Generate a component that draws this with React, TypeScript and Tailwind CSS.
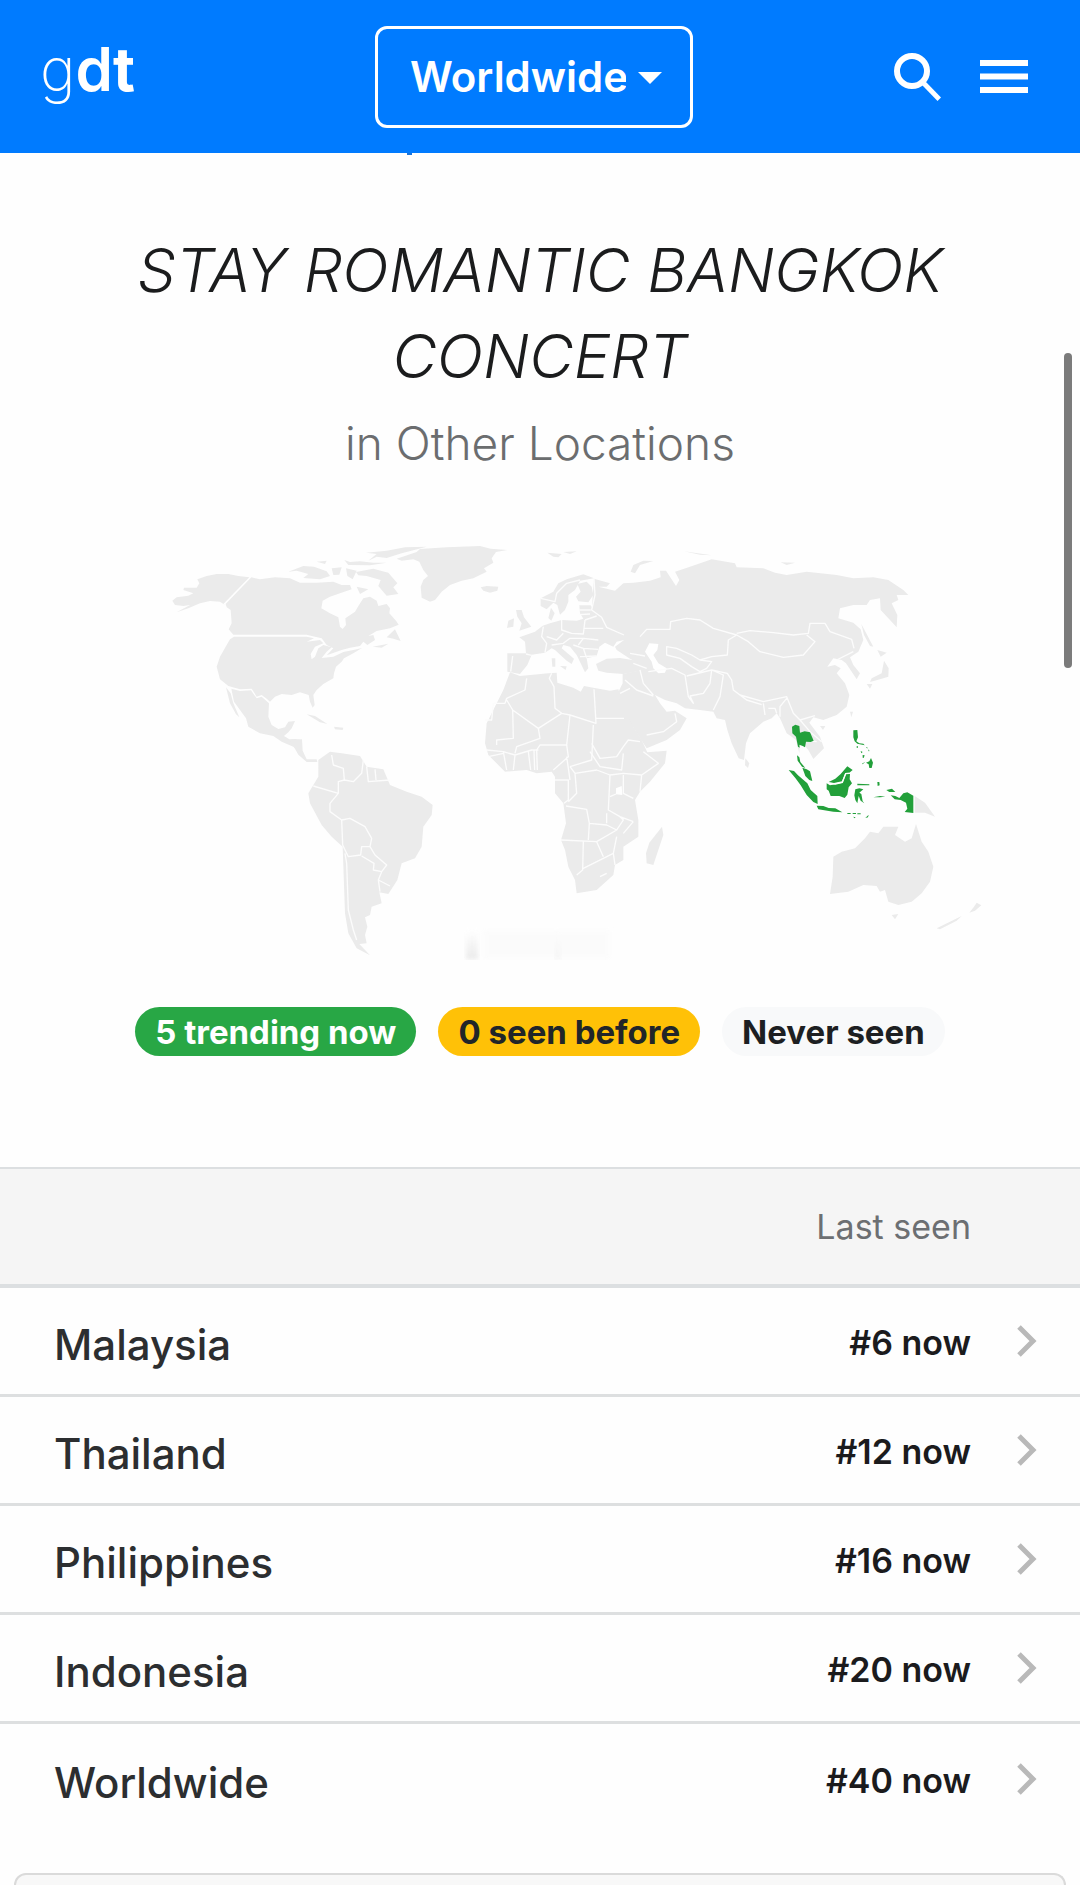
import React from "react";

const places = [
  { name: "Malaysia", rank: "#6 now" },
  { name: "Thailand", rank: "#12 now" },
  { name: "Philippines", rank: "#16 now" },
  { name: "Indonesia", rank: "#20 now" },
  { name: "Worldwide", rank: "#40 now" },
];

function Header() {
  return (
    <header className="relative grid h-[153px] grid-cols-[1fr_auto_1fr] items-center bg-[#007bff] pl-10 pr-[52px] text-white">
      <a href="#home" aria-label="gdt home" className="justify-self-start pb-4 text-[60px] leading-[72px]">
        <span className="font-extralight">g</span>
        <span className="font-semibold">d</span>
        <span className="font-bold">t</span>
      </a>
      <div className="relative">
        <select
          aria-label="Location"
          defaultValue="Worldwide"
          className="h-[102px] w-[318px] appearance-none rounded-[12px] border-3 border-white bg-transparent pl-[32px] pr-[64px] text-[42px] font-semibold text-white"
        >
          {places.map((p) => (
            <option key={p.name}>{p.name}</option>
          ))}
        </select>
        <svg aria-hidden="true" viewBox="0 0 24 12" className="pointer-events-none absolute right-[31px] top-[46px] h-3 w-6">
          <path d="M0 0H24L12 12Z" fill="white" />
        </svg>
      </div>
      <div className="flex items-center gap-[38px] justify-self-end">
        <button type="button" aria-label="Search">
          <svg viewBox="0 0 48 48" className="h-12 w-12">
            <circle cx="18" cy="18" r="15" fill="none" stroke="white" strokeWidth="6" />
            <path d="M28 29.500L31 28L47 44.500L43.500 48L28 32Z" fill="white" />
          </svg>
        </button>
        <button type="button" aria-label="Menu">
          <svg viewBox="0 0 48 33" className="h-[33px] w-12">
            <path d="M0 0H48V6H0ZM0 13.500H48V19.500H0ZM0 27H48V33H0Z" fill="white" />
          </svg>
        </button>
      </div>
      <span aria-hidden="true" className="absolute left-[407px] top-full h-0.5 w-[5px] bg-[#1a73d9]" />
    </header>
  );
}

function WorldMap() {
  return (
    <svg role="img" aria-label="World map of trending locations" viewBox="270 1620 2700 1260" className="w-[900px] max-w-full">
      <defs>
        <linearGradient id="fade" x1="0" y1="0" x2="0" y2="1">
          <stop offset="0" stopColor="#fff" />
          <stop offset="1" stopColor="#e2e2e2" />
        </linearGradient>
        <filter id="soft"><feGaussianBlur stdDeviation="6" /></filter>
      </defs>
      <g fill="#ebebeb" stroke="none">
        {/* North America */}
        <g transform="translate(480 1590)">
          <path d="M112 148L140 138L170 132L205 132L235 138L268 142L190 222L206 232L180 215L150 213L120 220L85 235L50 247L90 225L70 228L45 225L37 212L50 202L85 197L100 190L70 180L72 173L110 173L118 160Z" />
          <path d="M274 142L300 148L345 142L390 145L420 158L470 158L520 155L545 165L570 165L575 178L540 190L510 200L488 212L484 235L510 250L535 262L540 290L548 297L558 285L556 265L585 245L597 225L610 205L630 200L650 212L655 228L680 222L690 235L688 250L708 272L716 284L690 295L650 303L625 318L640 315L645 330L622 345L610 335L600 348L570 353L545 360L500 376L520 355L500 345L485 325L465 320L440 314L220 314L206 298L215 280L212 240L200 232L197 222Z" />
          <path d="M222 320L440 320L462 325L440 335L480 330L490 340L465 350L452 372L455 388L465 380L475 355L490 345L515 352L500 365L485 384L520 380L550 366L580 360L606 354L580 370L552 385L545 395L528 410L522 430L520 445L490 462L470 480L460 495L464 525L458 533L450 515L446 495L420 487L395 495L365 492L345 500L330 515L320 506L305 495L290 500L275 476L240 478L205 468L180 448L170 410L180 380L200 345L210 328Z" />
          <path d="M214 476L240 483L273 481L290 505L305 500L327 520L325 560L335 585L355 597L375 592L385 575L405 573L395 595L385 607L372 618L388 628L405 627L425 630L425 672L400 650L365 635L340 618L300 610L265 590L258 565L240 540L222 515Z" />
          <path d="M198 472L212 490L220 520L238 562L228 553L210 520Z" />
          <path d="M440 553L465 558L502 582L480 577Z" />
          <path d="M522 590L550 593L548 600L525 598Z" />
          <path d="M680 322L705 298L722 333L700 326Z" />
          <path d="M638 350L685 341L665 353Z" />
          <path d="M385 125L430 108L462 110L500 124L510 138L480 148L430 144L445 132L410 122Z" />
          <path d="M588 126L640 116L685 128L712 160L700 172L715 192L680 197L655 168L662 150L620 138L595 136Z" />
          <path d="M618 68L680 62L735 52L800 50L725 70L680 84L650 80L625 92L650 72Z" />
          <path d="M470 95L500 92L495 102Z" />
          <path d="M553 90L570 96L600 94L640 98L680 98L630 106L565 105Z" />
          <path d="M515 115L545 112L538 134L520 135Z" />
          <path d="M558 115L590 122L578 148L562 138Z" />
          <path d="M590 170L625 178L600 192Z" />
        </g>
        {/* Greenland and Europe */}
        <g transform="translate(1260 1590)">
          <path d="M0 57L80 52L180 48L212 56L262 60L228 66L215 85L220 98L192 115L200 125L160 145L125 152L90 165L65 185L45 210L30 215L5 203L2 170L10 150L24 138L10 120L-2 95L-20 88L-55 92L-70 86L-10 66Z" />
          <path d="M182 172L200 168L235 170L232 182L210 188L190 182Z" />
          <path d="M382 68L425 72L415 82L400 80Z" />
          <path d="M430 66L470 64L450 72Z" />
          <path d="M632 125L640 105L670 92L700 93L660 105L645 130Z" />
          <path d="M362 205L400 185L415 160L440 148L490 133L522 145L480 152L465 180L445 195L445 215L435 240L420 254L412 225L400 218L380 238L362 228Z" />
          <path d="M472 162L500 155L515 170L520 195L505 217L475 214L468 200L482 185Z" />
          <path d="M288 240L305 240L312 262L334 290L298 302L305 280L292 260Z" />
          <path d="M265 272L282 265L280 290L261 294Z" />
          <path d="M385 264L393 233L404 250L394 272Z" />
          <path d="M368 287L390 280L425 270L470 272L490 266L480 250L478 226L512 226L520 240L545 262L560 290L610 315L612 330L590 335L580 350L555 338L538 350L530 378L500 385L505 415L495 427L470 375L450 350L430 345L425 355L462 386L455 402L440 392L405 360L395 355L375 368L335 374L322 405L300 432L262 425L262 370L318 370L315 335L298 322L345 305Z" />
          <path d="M395 385H406V410H397Z" />
          <path d="M420 408L440 409L437 420Z" />
          <path d="M528 402L560 386L600 384L650 392L680 400L655 424L610 432L560 428L535 422Z" />
        </g>
        {/* Asia */}
        <g transform="translate(1920 1620)">
          <path d="M-138 116L-90 130L-100 140L-125 140L-75 152L-50 130L-20 128L30 122L62 112L60 92L78 92L108 138L118 120L105 95L150 80L215 58L285 70L290 82L370 85L405 98L440 105L500 95L590 105L640 115L700 112L745 120L790 150L805 165L770 165L775 180L755 190L772 225L770 262L745 235L722 210L720 175L690 180L680 195L640 195L600 205L595 235L640 248L662 268L670 300L655 335L630 352L640 375L660 400L650 418L635 395L618 370L605 360L580 355L562 380L585 375L602 385L590 400L615 430L628 465L620 500L590 525L550 540L520 532L508 548L540 590L552 625L520 657L505 630L480 600L478 640L468 600L455 590L440 580L420 535L410 520L395 535L370 545L330 580L318 610L312 660L296 655L275 610L262 570L255 540L230 535L220 515L180 510L135 505L110 490L75 480L45 465L60 490L80 515L105 512L140 535L120 570L80 600L20 625L10 610L-40 530L-72 470L-52 430L-52 402L-5 392L-5 370L-30 356L-70 330L-75 320L-48 300L-100 260L-145 210Z" />
          <path d="M664 252L700 320L690 318L672 285Z" />
          <path d="M712 330L740 338L722 350Z" />
          <path d="M732 362L746 385L745 410L712 420L690 426L695 415L725 400Z" />
          <path d="M680 432L697 432L690 446Z" />
          <path d="M630 515H639L634 532Z" />
          <path d="M540 558H556L549 570Z" />
          <path d="M132 34L215 46L180 44Z" />
          <path d="M422 67L465 68L440 75Z" />
          <path d="M316 655L328 670L324 684L315 676Z" />
        </g>
        {/* Africa */}
        <g transform="translate(1380 2160)">
          <path d="M150 -143L180 -132L265 -140L290 -142L292 -112L340 -97L362 -85L372 -102L400 -97L450 -88L475 -92L485 -62L476 -64L520 20L545 60L562 97L620 92L615 130L570 185L540 215L525 240L535 300L535 350L490 380L490 420L465 435L460 465L410 510L350 520L345 480L325 440L315 390L303 360L318 310L310 250L285 220L285 170L275 155L230 160L200 150L135 155L85 105L75 70L80 10L115 -60L130 -90Z" />
          <path d="M606 320L610 345L580 435L560 430L558 400L568 368Z" />
        </g>
        {/* South America */}
        <g transform="translate(870 2190)">
          <path d="M85 90L120 65L155 70L210 78L230 110L280 118L300 165L350 185L395 200L428 225L425 255L400 290L395 350L375 385L335 400L322 450L295 492L268 487L275 520L245 530L240 555L225 562L232 590L225 615L230 640L208 642L240 676L200 655L175 610L165 550L158 350L125 320L95 285L60 220L55 190L85 140Z" />
          <path d="M0 30L36 28L38 62L50 88L80 88L82 96L50 96L25 74Z" />
        </g>
        {/* Oceania */}
        <g transform="translate(2310 2100)">
          <path d="M190 470L215 455L255 445L285 415L300 395L325 400L340 380L385 380L375 405L405 425L425 415L438 372L455 425L475 455L490 500L480 545L455 580L425 605L385 615L355 605L345 570L330 575L320 558L280 555L235 575L180 582L188 530Z" />
          <path d="M365 645L385 642L375 658Z" />
          <path d="M500 685L575 648L560 662L510 688Z" />
          <path d="M598 638L612 620L620 608L634 616L615 632Z" />
          <path d="M434 288L465 308L495 350L465 338L434 338Z" />
        </g>
      </g>
      {/* Inland seas */}
      <g fill="#fff">
        <path transform="translate(1920 1620)" d="M15 335L28 310L55 312L52 330L40 345L55 370L80 385L75 398L55 400L40 385L35 365Z" />
        <path transform="translate(1380 2160)" d="M468 205L485 198L487 225L468 223Z" />
      </g>
      {/* Borders */}
      <g fill="none" stroke="#fcfcfc" strokeWidth="4" strokeLinejoin="round">
        <path transform="translate(1920 1620)" d="M0 290L20 268L90 268L92 245L140 235L180 240L220 265L290 285L265 300L262 345L215 350L180 360L155 345L110 325L80 320V345L120 355L155 380L180 395M290 280L330 272L400 278L460 285L505 280L510 250H555L570 275L635 298L642 325M290 285L325 305L360 335L430 352L490 345L525 305L500 285M180 360L215 365L200 385L180 395M25 395L95 385L135 405L145 470L160 490L150 468L190 460L210 430L215 390L140 408M215 390L250 405L240 470L220 510M215 390L262 400L275 420L280 450L300 465L370 485L440 470L460 520L480 540L525 527M300 465L320 480L365 494M370 490L375 525M385 505H405L410 520M440 475L420 500V530M0 390L10 430L40 465M-45 420L-10 450L40 468M-60 460L-30 445M20 585L70 575L110 545L105 520M480 540L510 575L545 605M490 600L530 605M-30 340L15 348M-20 370L20 385M590 360L640 335M-138 116L-135 165L-145 210L-115 232L-100 262L-48 285" />
        <path transform="translate(1260 1590)" d="M425 270V300L455 310L490 312L495 270M370 290L365 320L380 340L375 368M380 320L410 330L430 310M395 345L430 340L450 325L490 325L535 330M318 372L335 376M278 378L272 425M460 345L490 355L500 385M490 325L475 345M490 295L550 295M495 270L530 258M478 240H512M478 254L510 252M362 205L405 215L410 190L440 160L480 150M490 355L535 358M480 380L530 378M320 445L315 480L260 505L255 520L220 520L215 570H195M260 510L278 540L355 595L425 550L405 535L402 470L388 445L395 430M522 478L528 580L450 555L425 550M528 565H612M278 540L280 625L230 630V645M355 595L360 625L290 650L285 670M450 555L440 645L360 645L350 660L352 720M520 585L515 690L450 710M515 640L540 685L590 680L610 650L625 630L660 635" />
        <path transform="translate(1380 2160)" d="M330 140L345 160L410 150L450 165L445 270L480 290L520 305M390 95L420 140L485 150L490 100M490 160L545 165L595 130L550 95M545 165L540 215M490 165V220L520 235M450 165L490 160M450 230L468 222M440 310V280M285 180H325V240L312 250M345 160L350 220L325 245M318 258L380 268L388 310L440 315L470 330L490 300L480 290M303 360L410 365L470 330M388 310L385 360M370 365L368 450L350 465M370 445L430 415L460 400L470 350M410 365L430 410M460 400L465 435M420 470L440 460M80 90L130 95L140 150M85 110L130 100M130 95L165 105L215 90L235 90M165 105L160 150M205 95L212 150M222 92L224 150M320 75L325 110L280 150M320 110L330 180M520 305L490 340" />
        <path transform="translate(870 2190)" d="M125 75L130 105L160 115L163 150L190 155L215 130L220 90M230 110L235 155L300 150M255 118L258 150M163 150L145 155V190L70 168M145 190L120 220V245L155 270L180 265L225 290L245 325L240 350L215 350L212 375L175 380L158 345L155 270M240 350L255 375L290 405L275 425L250 420L252 400L215 378M275 425L265 450L300 468M265 450L270 485M165 370L170 400L175 540L190 600L200 630" />
      </g>
      {/* Trending countries */}
      <g transform="translate(2310 2100)" fill="#22a03a">
        <path d="M66 80L76 74L88 78L90 98L104 94L120 97L131 122L122 126L108 125L105 142L98 138L88 134L89 143L84 140L78 110L67 100Z" />
        <path d="M81 166L88 172L91 186L106 204L96 200L83 182Z" />
        <path d="M97 203L110 208L120 214L127 243L118 240L106 228Z" />
        <path d="M56 210L72 213L84 226L112 250L122 270L142 288L143 312L130 306L110 285L92 256L76 234Z" />
        <path d="M140 317L160 318L176 324L196 325L217 337L190 335L145 328Z" />
        <path d="M170 250L180 256L200 252L218 248L228 222L240 222L239 238L246 250L236 262L232 284L224 294L208 288L182 288L176 272L170 268Z" />
        <path d="M176 246L196 236L212 222L232 199L248 210L238 218L226 219L216 244L192 249Z" />
        <path d="M178 250L196 252L217 247L227 221L238 220" fill="none" stroke="#fff" strokeWidth="4" />
        <path d="M256 268L268 265L280 268L268 278L274 282L278 304L283 310L272 302L266 288L262 310L256 300L253 286Z" />
        <path d="M262 251L298 253V256H262ZM322 246L328 246L329 256L323 258ZM310 292L330 288L346 290L330 292ZM232 339H242V342H232ZM248 339H258V342H248ZM262 340H272V343H262ZM286 354L296 344L294 352ZM250 350L257 352L253 355Z" />
        <path d="M349 270L366 266L376 276L358 276Z" />
        <path d="M362 286L376 288L388 294L400 280L412 277L430 287V339L404 336L412 326L408 308L392 300L374 298Z" />
        <path d="M250 91L262 90L264 112L259 124L268 130L280 131L284 136L262 131L254 124L250 112Z" />
        <path d="M260 139H264V143H260ZM272 153L278 156L274 160ZM278 165L284 166L281 174L278 173ZM288 141L292 142L292 146ZM294 148L299 153L296 154ZM276 191L286 185L278 193Z" />
        <path d="M288 188L298 184L303 174L309 188L305 204L298 204L296 193Z" />
      </g>
      <g opacity="0.7">
        <rect x="1398" y="2790" width="36" height="88" fill="url(#fade)" filter="url(#soft)" />
        <rect x="1450" y="2790" width="380" height="88" fill="#fbfbfb" filter="url(#soft)" />
        <rect x="1664" y="2790" width="18" height="88" fill="url(#fade)" opacity="0.4" filter="url(#soft)" />
      </g>
    </svg>
  );
}

function Badge({ className, children }: { className: string; children: React.ReactNode }) {
  return (
    <span className={`rounded-full px-5 pb-1 pt-[5px] text-[33px] font-bold leading-[40px] ${className}`}>{children}</span>
  );
}

function PlacesTable() {
  return (
    <table className="w-full border-separate border-spacing-0">
      <thead>
        <tr className="h-[121px] bg-[#f5f5f5]">
          <th className="border-b-4 border-t-2 border-[#dcdfe1]"><span className="sr-only">Location</span></th>
          <th className="border-b-4 border-t-2 border-[#dcdfe1] text-right text-[34px] font-normal text-[#6c6f72]">Last seen</th>
          <th className="w-[109px] border-b-4 border-t-2 border-[#dcdfe1]" />
        </tr>
      </thead>
      <tbody className="[&>tr:not(:last-child)>td]:border-b-3 [&>tr>td]:border-[#dddfe0]">
        {places.map((p) => (
          <tr key={p.name} className="h-[109px]">
            <td className="pl-[54px] pt-2 text-[42px] font-medium leading-[52px] text-[#2c2e30]">
              <a href={`#${p.name.toLowerCase()}`}>{p.name}</a>
            </td>
            <td className="pt-1 text-right text-[34px] font-semibold leading-[40px] text-[#1b1b1d]">{p.rank}</td>
            <td className="pr-[43px]">
              <svg aria-hidden="true" viewBox="0 0 21 32" className="ml-auto h-8 w-[21px]">
                <path d="M3 2L17 16L3 30" fill="none" stroke="#b9b9b9" strokeWidth="5" />
              </svg>
            </td>
          </tr>
        ))}
      </tbody>
    </table>
  );
}

export default function App() {
  return (
    <div className="relative flex min-h-screen flex-col bg-[#fefefe] font-[Inter,sans-serif]">
      <Header />
      <main className="flex grow flex-col">
        <section className="flex flex-col items-center px-20 pt-[74px] text-center">
          <h1 className="text-[61px] font-light italic leading-[86px] text-[#1b1c1d]">STAY ROMANTIC BANGKOK CONCERT</h1>
          <p className="mt-4 text-[46px] font-light leading-[56px] text-[#6b6d6f]">in Other Locations</p>
          <div className="mt-[69px] flex justify-center">
            <WorldMap />
          </div>
          <div className="mt-[47px] flex gap-[22px] whitespace-nowrap">
            <Badge className="bg-[#28a745] text-white">5 trending now</Badge>
            <Badge className="bg-[#ffc107] text-[#212529]">0 seen before</Badge>
            <Badge className="bg-[#f8f9fa] text-[#1d1f22]">Never seen</Badge>
          </div>
        </section>
        <div className="mt-[111px]">
          <PlacesTable />
        </div>
        <div className="mx-[14px] mt-10 grow rounded-t-[12px] border-2 border-b-0 border-[#dadada] bg-[#f8f8f8]" />
      </main>
      <div aria-hidden="true" className="absolute right-[8px] top-[353px] h-[315px] w-2 rounded-full bg-[#7b7b7b]" />
    </div>
  );
}
